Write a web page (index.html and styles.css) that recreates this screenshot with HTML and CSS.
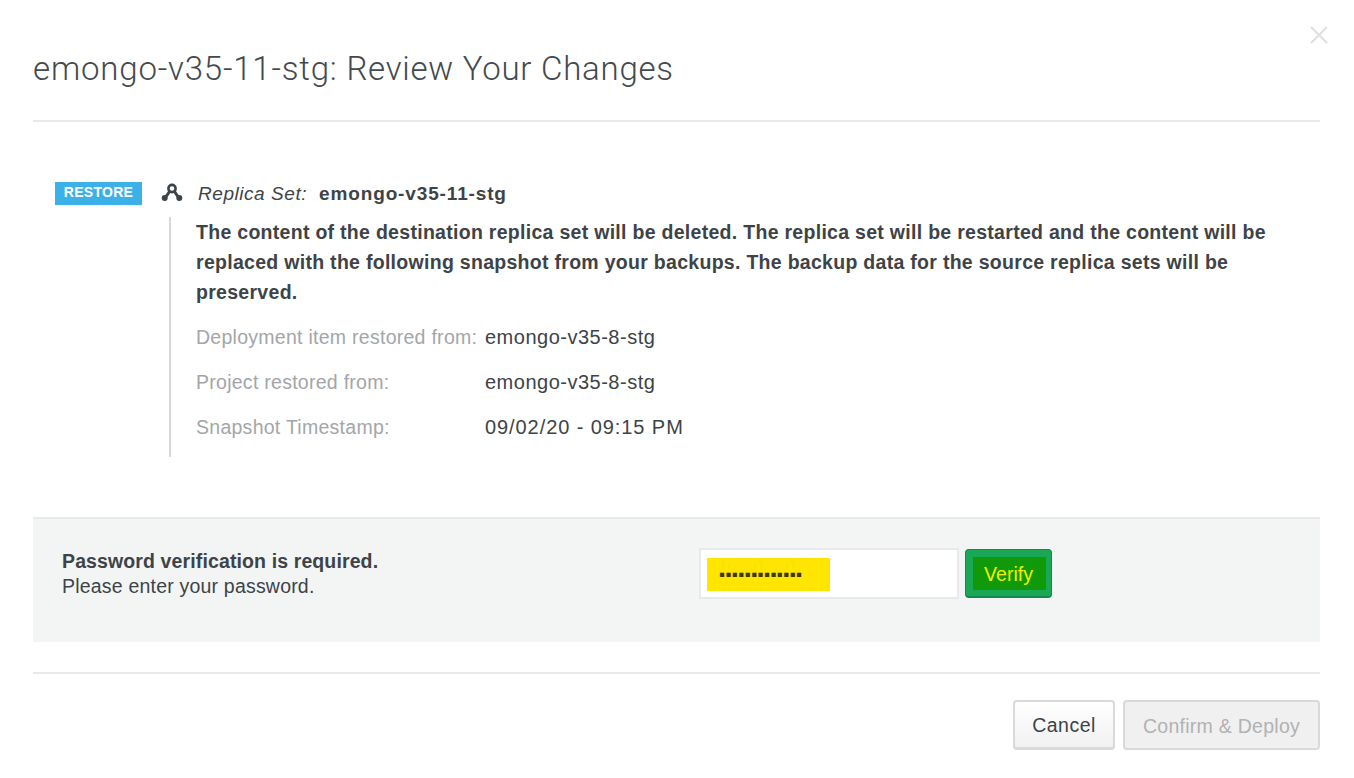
FILE: index.html
```html
<!DOCTYPE html>
<html lang="en">
<head>
<meta charset="utf-8">
<title>Review Your Changes</title>
<link rel="stylesheet" href="styles.css">
</head>
<body>
<div class="modal">
  <svg class="close" width="20" height="20" viewBox="0 0 20 20" aria-hidden="true"><path d="M2 2 L18 18 M18 2 L2 18"/></svg>
  <header class="head"><h1 class="title"><span class="title-name">emongo-v35-11-stg:</span> Review Your Changes</h1></header>
  <section class="change">
    <span class="badge">RESTORE</span>
    <div class="detail">
      <div class="target">
        <svg class="rs-icon" width="22" height="20" viewBox="0 0 22 20" aria-hidden="true">
          <path class="rs-line" d="M4.5 14.5 L11 5 L17.5 14.5"/>
          <circle class="rs-top" cx="11" cy="5.5" r="3.6"/><circle cx="3.7" cy="15" r="3"/><circle cx="18.3" cy="15" r="3"/>
        </svg>
        <em class="kind">Replica Set:</em><strong class="name">emongo-v35-11-stg</strong>
      </div>
      <div class="body">
        <p class="warn">The content of the destination replica set will be deleted. The replica set will be restarted and the content will be replaced with the following snapshot from your backups. The backup data for the source replica sets will be preserved.</p>
        <dl class="facts">
          <dt>Deployment item restored from:</dt><dd>emongo-v35-8-stg</dd>
          <dt>Project restored from:</dt><dd>emongo-v35-8-stg</dd>
          <dt>Snapshot Timestamp:</dt><dd class="stamp">09/02/20 - 09:15 PM</dd>
        </dl>
      </div>
    </div>
  </section>
  <section class="verify">
    <div class="verify-text"><strong>Password verification is required.</strong><span>Please enter your password.</span></div>
    <div class="verify-form">
      <div class="input"><span class="filled">▪▪▪▪▪▪▪▪▪▪▪▪▪</span></div>
      <button class="btn-verify" type="button"><span>Verify</span></button>
    </div>
  </section>
  <footer class="foot">
    <button class="btn cancel" type="button">Cancel</button>
    <button class="btn disabled" type="button">Confirm &amp; Deploy</button>
  </footer>
</div>
</body>
</html>
```
FILE: styles.css
```css
* { box-sizing: border-box; }
html, body { margin: 0; height: 100%; background: #fff; }
body { font-family: "Liberation Sans", Arial, sans-serif; color: #3d4347; overflow: hidden; }
.modal { position: relative; width: 1354px; height: 778px; padding: 0 34px 0 33px; }
.close { position: absolute; top: 25px; left: 1309px; }
.close path { stroke: #dfdfdf; stroke-width: 2; fill: none; }
.head { height: 122px; border-bottom: 2px solid #e8eaea; padding-top: 48px; }
.title { margin: 0; font-family: Roboto, "Liberation Sans", sans-serif; font-size: 33px; line-height: 42px; font-weight: 300; color: #43494d; letter-spacing: 0.75px; }
.title-name { letter-spacing: 0.82px; }
.change { display: flex; height: 395px; padding: 60px 0 0 22px; }
.badge { width: 87px; height: 23px; background: #3bb1e8; color: #fff; font-size: 14px; font-weight: 700; line-height: 20px; text-align: center; letter-spacing: 0.3px; flex: none; }
.detail { margin-left: 18px; flex: 1; }
.target { display: flex; align-items: center; height: 24px; }
.rs-icon { flex: none; margin-left: 1px; margin-top: -2px; }
.rs-icon circle { fill: #3d4347; }
.rs-icon .rs-top { fill: #fff; stroke: #3d4347; stroke-width: 2.6; }
.rs-line { stroke: #3d4347; stroke-width: 3; fill: none; }
.kind { font-size: 19px; margin-left: 15px; letter-spacing: 0.55px; }
.name { font-size: 19px; margin-left: 12px; letter-spacing: 0.86px; }
.body { margin: 11px 0 0 9px; border-left: 2px solid #d6d8d8; padding: 0 0 15px 25px; height: 240px; }
.warn { margin: 0; font-size: 19.5px; line-height: 30px; font-weight: 700; width: 1090px; letter-spacing: 0.29px; }
.facts { display: grid; grid-template-columns: 289px 1fr; margin: 15px 0 0; font-size: 19.5px; line-height: 30px; row-gap: 15px; }
.facts dt { color: #a2a6a8; letter-spacing: 0.27px; }
.facts dd { margin: 0; font-size: 20px; letter-spacing: 0.5px; }
.facts .stamp { letter-spacing: 0.92px; }
.verify { display: flex; height: 125px; background: #f3f5f4; border-top: 2px solid #e8eaea; padding: 29px 28px 0; }
.verify-text { width: 638px; font-size: 19.5px; line-height: 25px; margin: 1px -1px 0 1px; }
.verify-text strong { display: block; letter-spacing: 0.12px; }
.verify-text span { display: block; letter-spacing: 0.2px; }
.verify-form { display: flex; gap: 6px; align-items: flex-start; }
.input { width: 260px; height: 51px; background: #fff; border: 2px solid #e8e9e9; padding: 8px 6px; }
.filled { display: block; width: 123px; height: 33px; background: #ffe500; color: #3d3a00; font-size: 17px; line-height: 33px; padding-left: 12px; letter-spacing: 0.4px; overflow: hidden; font-weight: 700; }
.btn-verify { width: 87px; height: 49px; margin-top: 1px; padding: 7px 5px 6px 7px; background: #1aa856; border: 1px solid #0f8a4a; border-bottom-width: 2px; border-radius: 4px; font: inherit; color: #f0f000; font-size: 19.5px; }
.btn-verify span { display: block; height: 100%; background: #109a0a; line-height: 35px; padding-right: 2px; }
.foot { display: flex; justify-content: flex-end; gap: 8px; margin-top: 30px; border-top: 2px solid #e8eaea; padding-top: 26px; }
.btn { height: 50px; width: 197px; padding: 2px 0 0; background: #f0f0f0; border: 2px solid #d9d9d9; border-radius: 4px; font: inherit; font-size: 19.5px; color: #b0b2b3; letter-spacing: 0.27px; }
.cancel { width: 102px; background: linear-gradient(#fff, #f1f1f1); border-bottom-width: 3px; color: #3d4347; letter-spacing: 0.5px; }
```
